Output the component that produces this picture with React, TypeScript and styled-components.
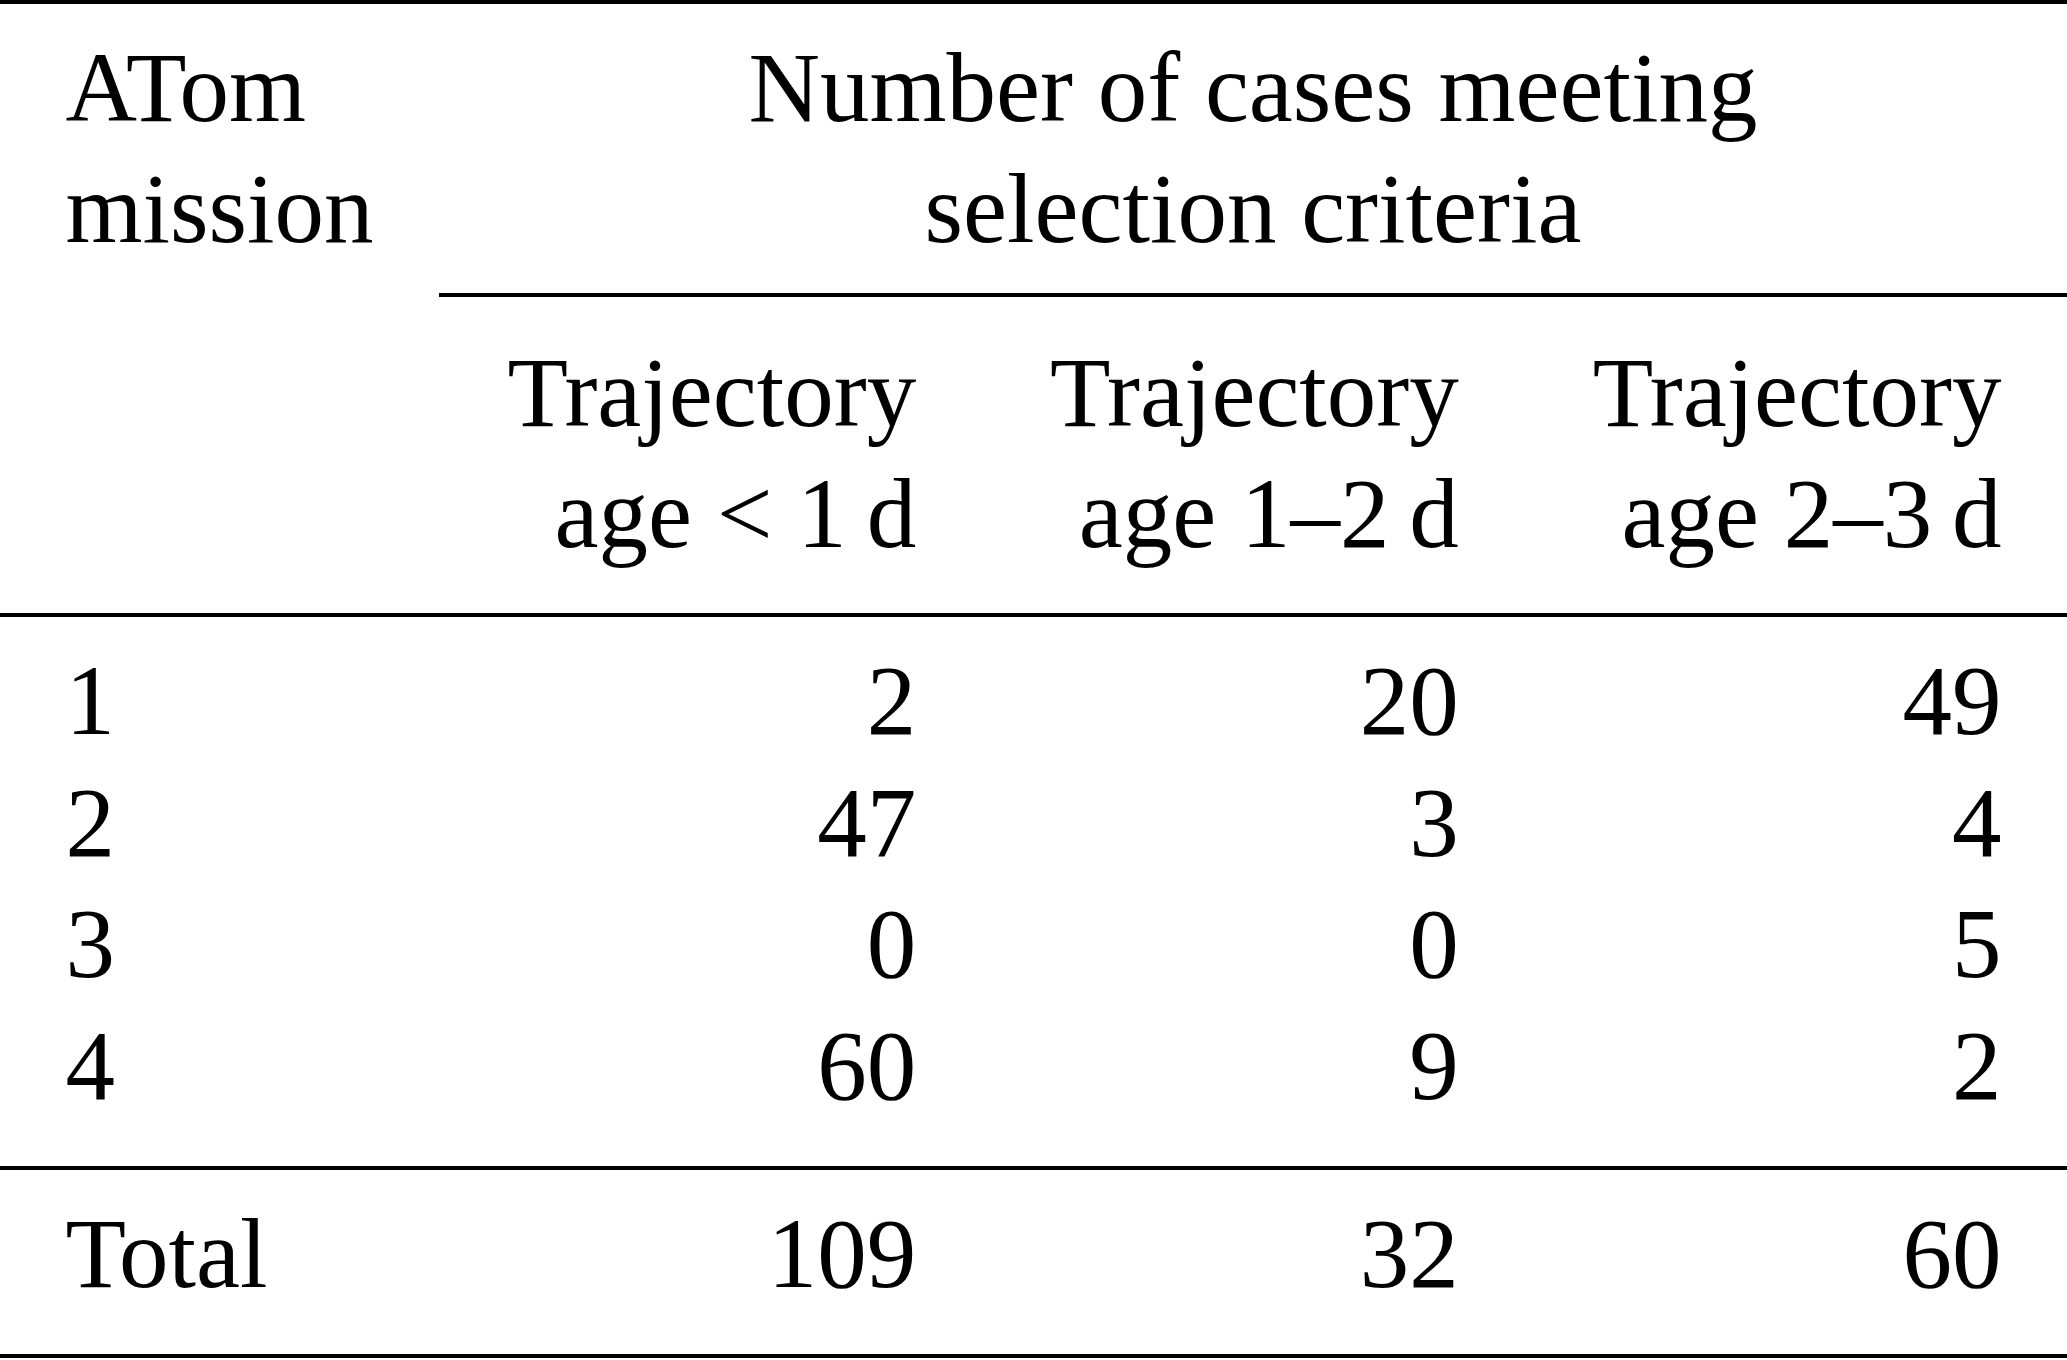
import React from "react";
import styled, { createGlobalStyle } from "styled-components";

const GlobalStyle = createGlobalStyle`
  html, body {
    margin: 0;
    padding: 0;
    background: #ffffff;
  }
`;

const COLUMNS = "439px 542.67px 542.67px 542.66px";

const rows = [
	{ mission: "1", values: ["2", "20", "49"] },
	{ mission: "2", values: ["47", "3", "4"] },
	{ mission: "3", values: ["0", "0", "5"] },
	{ mission: "4", values: ["60", "9", "2"] }
];

const totals = ["109", "32", "60"];

const ages = ["age < 1\u2009d", "age 1–2\u2009d", "age 2–3\u2009d"];

export default function App() {
	return (
		<>
			<GlobalStyle />
			<Table>
				<Rule />
				<Row $top={23.1} $bottom={23.9}>
					<Cell>
						ATom
						<br />
						mission
					</Cell>
					<SpanCell>
						Number of cases meeting
						<br />
						selection criteria
					</SpanCell>
				</Row>
				<RuleRow>
					<Rule $from={2} />
				</RuleRow>
				<Row $top={35.1} $bottom={38.9}>
					<Cell />
					{ages.map((age) => (
						<Cell key={age} $align="right">
							Trajectory
							<br />
							{age}
						</Cell>
					))}
				</Row>
				<Rule />
				<Body>
					{rows.map((r) => (
						<Row key={r.mission} $lineHeight={121.6}>
							<Cell>{r.mission}</Cell>
							{r.values.map((v, i) => (
								<Cell key={i} $align="right">
									{v}
								</Cell>
							))}
						</Row>
					))}
				</Body>
				<Rule />
				<Row $top={23.1} $bottom={39.9}>
					<Cell>Total</Cell>
					{totals.map((t, i) => (
						<Cell key={i} $align="right">
							{t}
						</Cell>
					))}
				</Row>
				<Rule />
			</Table>
		</>
	);
}

const Table = styled.div({
	width: "2067px",
	fontFamily: '"Liberation Serif", "Times New Roman", serif',
	fontSize: "99px",
	lineHeight: "121px",
	color: "#000000",
	display: "flex",
	flexDirection: "column"
});

const Row = styled.div<{ $top?: number; $bottom?: number; $lineHeight?: number }>`
	display: grid;
	grid-template-columns: ${COLUMNS};
	padding: ${(p) => p.$top ?? 0}px 0 ${(p) => p.$bottom ?? 0}px;
	line-height: ${(p) => (p.$lineHeight ? `${p.$lineHeight}px` : "inherit")};
`;

const Body = styled.div({
	display: "flex",
	flexDirection: "column",
	padding: "23.1px 0 39.5px"
});

const Cell = styled.div<{ $align?: "left" | "right" | "center" }>`
	padding: 0 65.5px;
	text-align: ${(p) => p.$align ?? "left"};
	white-space: nowrap;
`;

const SpanCell = styled(Cell)({
	gridColumn: "2 / -1",
	textAlign: "center"
});

const RuleRow = styled.div({
	display: "grid",
	gridTemplateColumns: COLUMNS
});

const Rule = styled.div<{ $from?: number }>`
	height: 4px;
	background: #000000;
	grid-column: ${(p) => p.$from ?? 1} / -1;
`;
